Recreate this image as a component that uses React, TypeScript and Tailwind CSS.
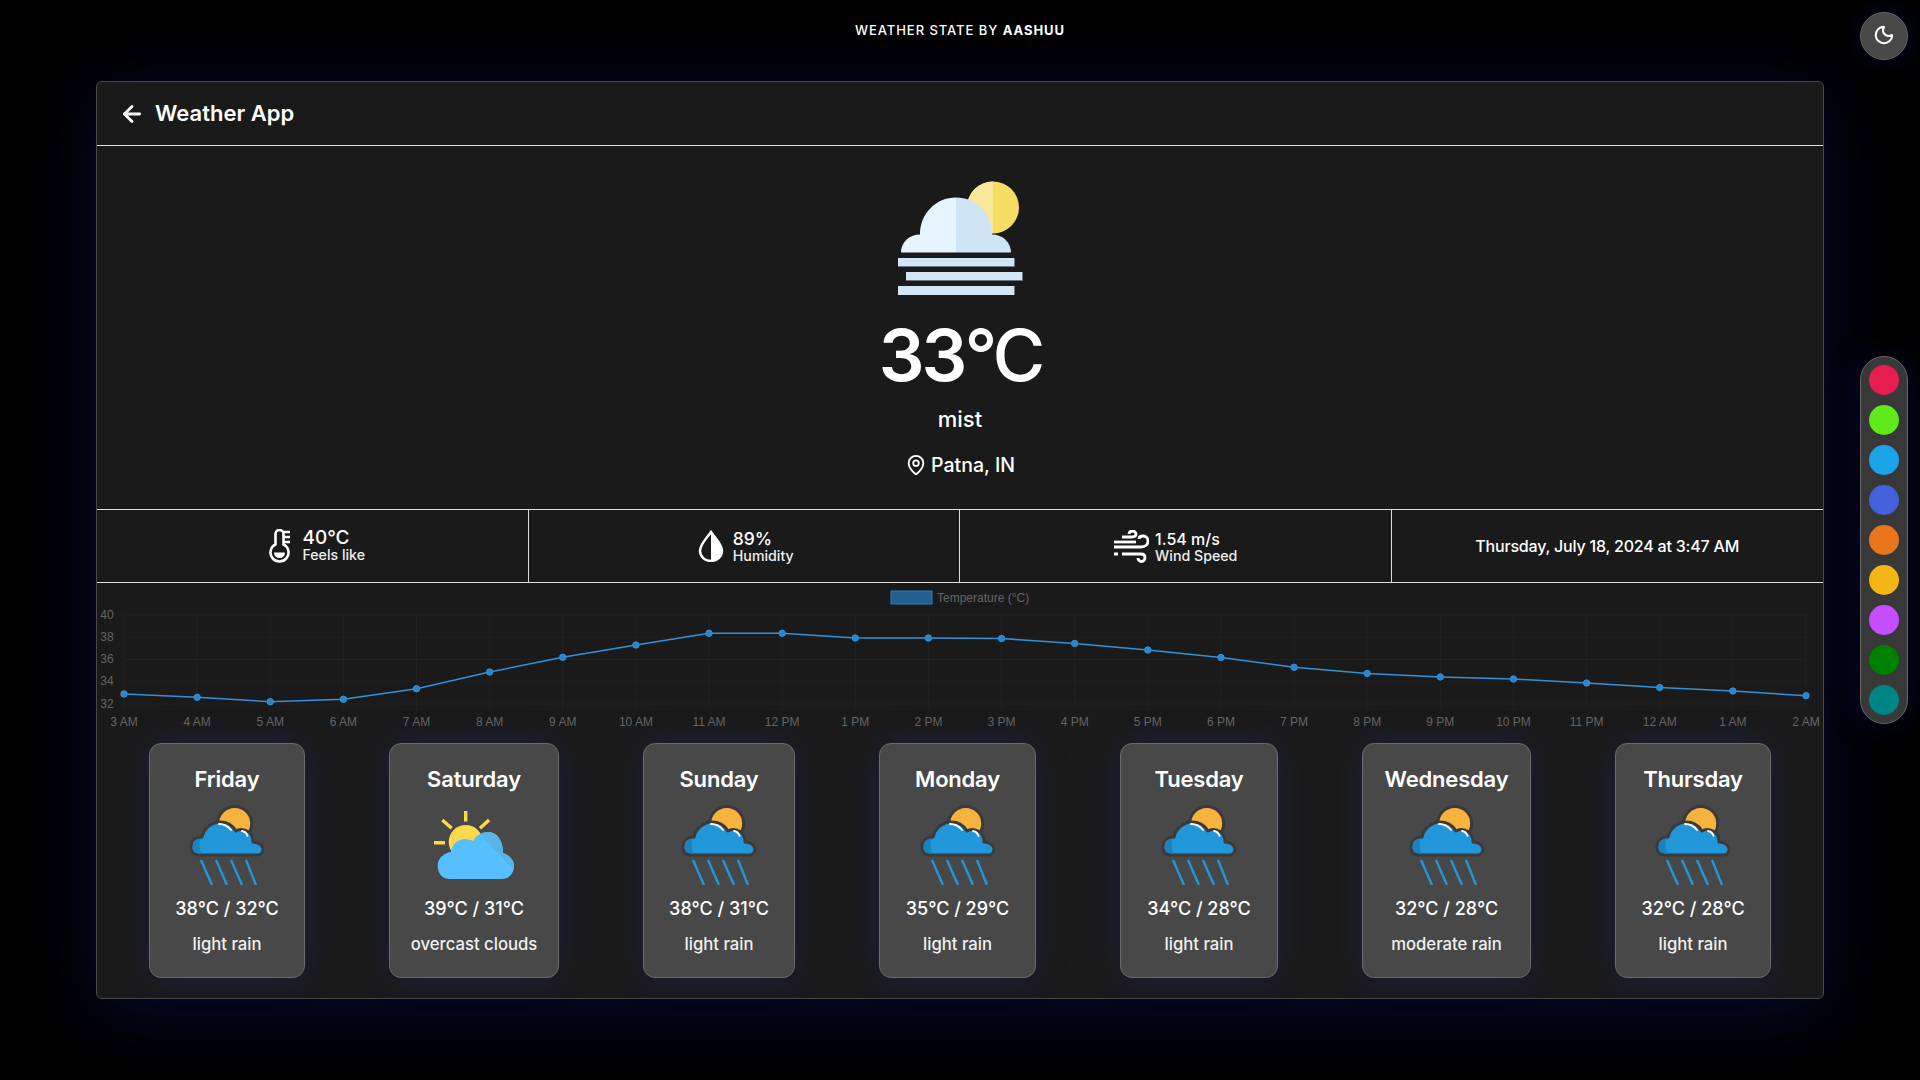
import React from 'react';
import { ArrowLeft, Moon, MapPin } from 'lucide-react';

const temps = [694, 697.3, 701.7, 699.3, 688.7, 672, 657.3, 645, 633.3, 633.3, 638, 638, 638.5, 643.5, 650, 657.5, 667.3, 673.5, 677, 679, 683, 687.5, 691, 695.7];
const hours = ['3 AM', '4 AM', '5 AM', '6 AM', '7 AM', '8 AM', '9 AM', '10 AM', '11 AM', '12 PM', '1 PM', '2 PM', '3 PM', '4 PM', '5 PM', '6 PM', '7 PM', '8 PM', '9 PM', '10 PM', '11 PM', '12 AM', '1 AM', '2 AM'];
const swatches = ['bg-[#e91e50]', 'bg-[#5fe81a]', 'bg-[#1ba3e8]', 'bg-[#4361db]', 'bg-[#e8751a]', 'bg-[#f4b614]', 'bg-[#c44dff]', 'bg-[#008000]', 'bg-[#008585]'];

const days = [
  { name: 'Friday', range: '38°C / 32°C', desc: 'light rain', width: 'w-[156px]', icon: 'rain' },
  { name: 'Saturday', range: '39°C / 31°C', desc: 'overcast clouds', width: 'w-[170px]', icon: 'clouds' },
  { name: 'Sunday', range: '38°C / 31°C', desc: 'light rain', width: 'w-[152px]', icon: 'rain' },
  { name: 'Monday', range: '35°C / 29°C', desc: 'light rain', width: 'w-[157px]', icon: 'rain' },
  { name: 'Tuesday', range: '34°C / 28°C', desc: 'light rain', width: 'w-[158px]', icon: 'rain' },
  { name: 'Wednesday', range: '32°C / 28°C', desc: 'moderate rain', width: 'w-[169px]', icon: 'rain' },
  { name: 'Thursday', range: '32°C / 28°C', desc: 'light rain', width: 'w-[156px]', icon: 'rain' },
];

function MistIcon() {
  return (
    <svg width="126" height="114" viewBox="0 0 126 114" className="ml-[2px] block">
      <circle cx="95" cy="26.4" r="26" fill="#f5dc62" />
      <path d="M95 .4a26 26 0 0 0-26 26 26 26 0 0 0 26 26z" fill="#f9e89c" />
      <path d="M3 71.5c0-10 8-18 19-18 0-21 16-37 36-37v55z" fill="#e6f4fd" />
      <path d="M58 16.5c20 0 36 16 36 37 11 0 19 8 19 18H58z" fill="#cfe4f5" />
      <rect x="0" y="77" width="117" height="9" fill="#6b7885" />
      <rect x="0" y="77" width="116" height="8" fill="#d2e6f6" />
      <rect x="8" y="91" width="117" height="9" fill="#6b7885" />
      <rect x="8" y="91" width="116" height="8" fill="#d2e6f6" />
      <rect x="0" y="105" width="117" height="9" fill="#6b7885" />
      <rect x="0" y="105" width="116" height="9" fill="#d2e6f6" />
    </svg>
  );
}

function RainIcon() {
  return (
    <svg width="76" height="80" viewBox="0 0 76 80" className="block">
      <circle cx="45.7" cy="18.5" r="17" fill="#f5b23c" stroke="#3a3a3a" strokeWidth="3" />
      <path d="M10 50C4 50 2 46 2 42 2 36 6 32 13 32 15 23 23 17 31 17 38 17 44 21 47 26 50 24 54 24 58 26 62 28 64 32 64 37 70 37 74 41 74 44 74 48 71 50 68 50Z" fill="#2196d8" stroke="#3a3a3a" strokeWidth="3" strokeLinejoin="round" />
      <path d="M10 48.5C5.5 48.5 3.5 45 3.5 42 3.5 37 7 33.5 12 33.5 9.5 38 10 44 13 48.5Z" fill="#1c82bf" />
      <path d="M30 19c5 0 9 2 12 6M53 26c3 .5 5 3 5.5 5" stroke="#fff" strokeWidth="1.8" fill="none" strokeLinecap="round" />
      <g stroke="#2196d8" strokeWidth="2.4">
        <path d="M12 55l11 25M27 55l11 25M42 55l11 25M57 55l10 25" />
      </g>
    </svg>
  );
}

function CloudsIcon() {
  return (
    <svg width="80" height="68" viewBox="0 0 80 68" className="block">
      <g stroke="#ffd94d" strokeWidth="3.4">
        <path d="M31.7 0v10.5M8.3 9l9.4 8.3M55 9l-9 8.3M0 31.7h11" />
      </g>
      <circle cx="31.7" cy="31" r="17" fill="#ffd94d" />
      <path d="M16 68C8 68 3.7 62 3.7 55 3.7 47 10 42 17 41 18 33 24 28 31 28 34 28 37 29 39 30 42 24 48 21 54 21 63 21 69 29 69 42 75 44 80 49 80 55 80 63 74 68 68 68Z" fill="#55bfff" />
      <path d="M46 24C48 22 51 21 54 21 63 21 69 29 69 42 75 44 80 49 80 55 80 56 80 57 79.6 58Z" fill="#5ab4e8" />
    </svg>
  );
}

function Thermometer() {
  return (
    <svg width="21" height="34" viewBox="0 0 21 34" className="block shrink-0">
      <path d="M6.5 15.44V5a4 4 0 0 1 8 0v10.44A9 9 0 1 1 6.5 15.44z" fill="none" stroke="#fff" strokeWidth="2.6" />
      <path d="M5 23.5h11a5.5 5.5 0 0 1-11 0z" fill="#fff" />
      <path d="M14.5 3h6.5M14.5 8h6.5M14.5 13h6.5" stroke="#fff" strokeWidth="2.4" />
    </svg>
  );
}

function Droplet() {
  return (
    <svg width="26" height="32" viewBox="0 0 26 32" className="block shrink-0">
      <path d="M13 2C9 8 2 14 2 21a11 10 0 0 0 22 0C24 14 17 8 13 2z" fill="none" stroke="#fff" strokeWidth="2.4" />
      <path d="M13 2c4 6 11 12 11 19a11 10 0 0 1-11 10z" fill="#fff" />
    </svg>
  );
}

function WindIcon() {
  return (
    <svg width="35" height="33" viewBox="0 0 35 33" className="block shrink-0" fill="none" stroke="#fff" strokeWidth="2.8">
      <path d="M8 7h10c3 0 4-1.5 4-3s-1.5-3-3.5-3S15 2 15 4" />
      <path d="M0 12h22" />
      <path d="M0 17h27c4 0 7-2 7-6s-3-5-5-5-4 1-4 3" />
      <path d="M0 24h4M8 24h19c2.5 0 4 1.5 4 3.5S29.5 31.5 27.5 31.5 24 30 24 28" />
    </svg>
  );
}

function Stat({ icon, value, label, className, valueClass }: { icon: React.ReactNode; value: string; label: string; className: string; valueClass: string }) {
  return (
    <div className={`flex items-center justify-center border-r border-[#ddd] ${className}`}>
      {icon}
      <div className="flex flex-col text-white">
        <span className={`${valueClass} font-medium leading-[18px]`}>{value}</span>
        <span className="text-[14.2px] font-medium leading-[16px] text-[#eee]">{label}</span>
      </div>
    </div>
  );
}

function Chart() {
  // Drawn in page coordinates, shifted into the svg box
  const ox = 97;
  const oy = 583;
  const xs = temps.map((_, i) => 124 + i * 73.13 - ox);
  const ys = temps.map((y) => y - oy);
  const ticks = [
    { label: '40', y: 615 },
    { label: '38', y: 637.25 },
    { label: '36', y: 659.5 },
    { label: '34', y: 681.75 },
    { label: '32', y: 704 },
  ];
  return (
    <svg width="1726" height="160" viewBox="0 0 1726 160" className="block">
      <rect x="794" y="8" width="41" height="13" fill="#205f8f" stroke="#2b7fc0" />
      <text x="840" y="18.5" fontSize="12" fill="#666" fontFamily="Liberation Sans, Arial, sans-serif">Temperature (°C)</text>
      {ticks.map((t) => (
        <g key={t.label}>
          <line x1="27" x2="1709" y1={t.y - oy} y2={t.y - oy} stroke="#212121" />
          <text x="10" y={t.y - oy + 3.6} textAnchor="middle" fontSize="12" fill="#666" fontFamily="Liberation Sans, Arial, sans-serif">{t.label}</text>
        </g>
      ))}
      {xs.map((x, i) => (
        <g key={hours[i]}>
          <line x1={x} x2={x} y1={32} y2={127} stroke="#212121" />
          <text x={x} y={143} textAnchor="middle" fontSize="12" fill="#666" fontFamily="Liberation Sans, Arial, sans-serif">{hours[i]}</text>
        </g>
      ))}
      <polyline points={xs.map((x, i) => `${x},${ys[i]}`).join(' ')} fill="none" stroke="#2f93dc" strokeWidth="1.5" />
      {xs.map((x, i) => (
        <circle key={i} cx={x} cy={ys[i]} r="3.2" fill="#2f84c8" stroke="#2f93dc" />
      ))}
    </svg>
  );
}

export default function App() {
  return (
    <div className="relative h-[1080px] w-[1920px] overflow-hidden bg-black font-['Inter',sans-serif] text-white">
      <h1 className="pt-[21px] text-center text-[13px] font-medium leading-[18px] tracking-[0.95px]">
        WEATHER STATE BY <span className="font-bold">AASHUU</span>
      </h1>

      <div className="mx-[96px] mt-[42px] h-[918px] rounded-[6px] border border-[#4a4a4a] bg-[#1a1a1a] shadow-[0_12px_70px_rgba(20,25,130,0.35)]">
        <div className="flex h-[64px] items-center gap-[10px] border-b border-[#ddd] pl-[22px]">
          <ArrowLeft size={26} strokeWidth={2.6} />
          <span className="text-[22px] font-semibold">Weather App</span>
        </div>

        <div className="flex h-[364px] flex-col items-center border-b border-[#ddd] pt-[35px]">
          <MistIcon />
          <div className="mt-[15px] text-[72px] font-semibold leading-[90px] tracking-[-3px]">
            33<span className="font-medium tracking-[-4px]">°C</span>
          </div>
          <div className="mt-[4px] text-[22px] font-medium leading-[30px]">mist</div>
          <div className="mt-[16px] flex items-center gap-[4px] text-[19.5px] font-medium leading-[30px]">
            <MapPin size={22} strokeWidth={2} />
            Patna, IN
          </div>
        </div>

        <div className="grid h-[73px] grid-cols-4 border-b border-[#ddd]">
          <Stat className="gap-[12px] pl-[10px]" valueClass="text-[19px]" icon={<Thermometer />} value="40°C" label="Feels like" />
          <Stat className="gap-[9px] pl-[4px]" valueClass="text-[17.5px] pt-[1px]" icon={<Droplet />} value="89%" label="Humidity" />
          <Stat className="gap-[6px] pl-[1px]" valueClass="text-[16px] pt-[1px]" icon={<WindIcon />} value="1.54 m/s" label="Wind Speed" />
          <div className="flex items-center justify-center text-[16px] font-medium tracking-[-0.2px]">Thursday, July 18, 2024 at 3:47 AM</div>
        </div>

        <Chart />

        <div className="flex justify-around px-[10px]">
          {days.map((d) => (
            <div key={d.name} className={`${d.width} flex h-[235px] flex-col items-center rounded-[12px] border border-[#6a6a6a] bg-[#484848] shadow-[0_0_32px_rgba(40,45,150,0.28)]`}>
              <div className="mt-[19px] text-[22px] font-semibold leading-[32px] tracking-[-0.2px]">{d.name}</div>
              <div className="mt-[9px] flex h-[82px] items-center justify-center">
                {d.icon === 'rain' ? <RainIcon /> : <CloudsIcon />}
              </div>
              <div className="mt-[10px] text-[18px] font-medium leading-[26px]">{d.range}</div>
              <div className="mt-[10px] text-[16.7px] font-medium leading-[24px] text-[#f0f0f0]">{d.desc}</div>
            </div>
          ))}
        </div>
      </div>

      <button className="absolute right-[12px] top-[12px] flex h-[48px] w-[48px] items-center justify-center rounded-full border border-[#666] bg-[#484848] shadow-[0_0_30px_rgba(20,25,130,0.35)]">
        <Moon size={22} strokeWidth={2.2} className="mb-[2px]" />
      </button>

      <div className="absolute right-[12px] top-[356px] flex h-[368px] w-[48px] flex-col items-center gap-[10px] rounded-full border border-[#666] bg-[#383838] pt-[8px] shadow-[0_0_30px_rgba(20,25,130,0.35)]">
        {swatches.map((c) => (
          <div key={c} className={`${c} h-[30px] w-[30px] shrink-0 rounded-full`} />
        ))}
      </div>
    </div>
  );
}
